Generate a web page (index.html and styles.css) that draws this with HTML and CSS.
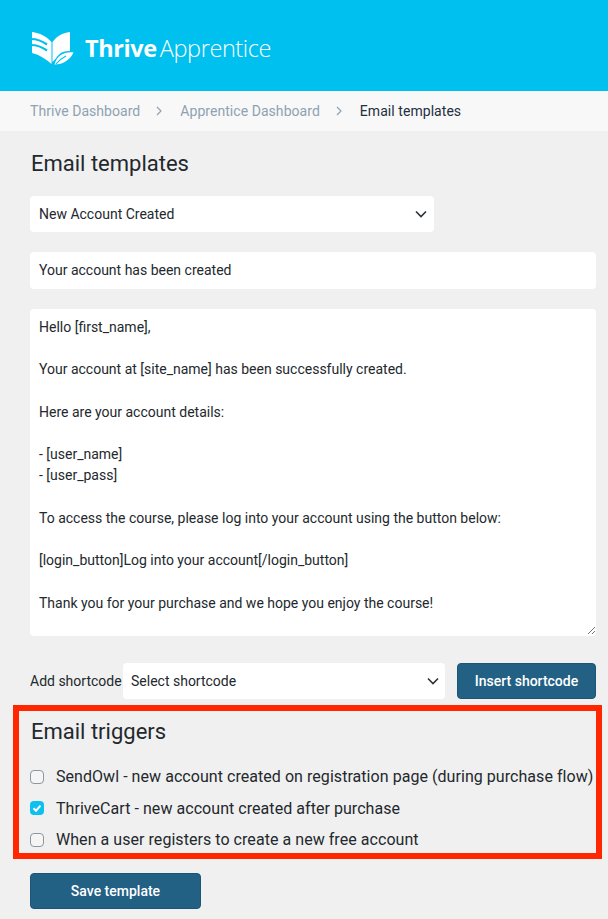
FILE: index.html
```html
<!DOCTYPE html>
<html lang="en">
<head>
    <meta charset="UTF-8">
    <meta name="viewport" content="width=device-width, initial-scale=1.0">
    <title>Email templates</title>
    <link rel="stylesheet" href="styles.css">
</head>
<body>
    <header class="topbar">
        <svg class="logo-icon" viewBox="0 0 42 34" width="42" height="34">
            <path class="page" d="M0 0C8 1 14 4 19.500 10V32C14 27 8 23 0 21Z"/>
            <path class="page" d="M38 0C30 1 25 4 20.500 10V30C25 25 31 21 38 20Z"/>
            <path class="gap" d="M-1 7C5 7 10 9 15 12.500M-1 13C5 13 10 15 15 18.500"/>
            <path class="leaf-back" d="M42 19.500C32 17.500 24 21 21 33.500L23 34.500C33 34 39 29 42 19.500Z"/>
            <path class="leaf" d="M41.500 20.500C32 19.500 25 23.500 22.500 32.500C31 32.500 38 28 41.500 20.500Z"/>
            <path class="gap thin" d="M24 32C27 28 30 26 34 24"/>
        </svg>
        <div class="logo-text"><b>Thrive</b><span>Apprentice</span></div>
    </header>

    <nav class="crumbs">
        <a href="#">Thrive Dashboard</a>
        <svg class="sep" viewBox="0 0 6 10" width="6" height="10"><path d="M1 1l4 4-4 4"/></svg>
        <a href="#">Apprentice Dashboard</a>
        <svg class="sep" viewBox="0 0 6 10" width="6" height="10"><path d="M1 1l4 4-4 4"/></svg>
        <span class="current">Email templates</span>
    </nav>

    <main class="content">
        <h2 class="title">Email templates</h2>

        <div class="select template-select">
            <span>New Account Created</span>
            <svg class="chev" viewBox="0 0 12 8" width="12" height="8"><path d="M1 1.500l5 5 5-5"/></svg>
        </div>

        <div class="field subject">Your account has been created</div>

        <div class="field body-text">
            <p>Hello [first_name],</p>
            <p>Your account at [site_name] has been successfully created.</p>
            <p>Here are your account details:</p>
            <p>- [user_name]<br>- [user_pass]</p>
            <p>To access the course, please log into your account using the button below:</p>
            <p>[login_button]Log into your account[/login_button]</p>
            <p>Thank you for your purchase and we hope you enjoy the course!</p>
            <svg class="grip" viewBox="0 0 9 9" width="9" height="9"><path d="M1 8l7-7M5 8l3-3"/></svg>
        </div>

        <div class="shortcode-row">
            <label>Add shortcode</label>
            <div class="select shortcode-select">
                <span>Select shortcode</span>
                <svg class="chev" viewBox="0 0 12 8" width="12" height="8"><path d="M1 1.500l5 5 5-5"/></svg>
            </div>
            <button class="btn insert">Insert shortcode</button>
        </div>

        <section class="triggers">
            <h2 class="title">Email triggers</h2>
            <div class="check-row">
                <span class="box"></span>
                <span>SendOwl - new account created on registration page (during purchase flow)</span>
            </div>
            <div class="check-row">
                <span class="box on"><svg viewBox="0 0 14 14" width="14" height="14"><path d="M3.500 7.200l2.500 2.500 4.500-5"/></svg></span>
                <span>ThriveCart - new account created after purchase</span>
            </div>
            <div class="check-row">
                <span class="box"></span>
                <span>When a user registers to create a new free account</span>
            </div>
        </section>

        <button class="btn save">Save template</button>
    </main>
</body>
</html>
```

FILE: styles.css
```css
body {
    margin: 0;
    background: #f0f0f0;
    color: #23282d;
    font-family: Roboto, "Liberation Sans", sans-serif;
    font-size: 14px;
    overflow: hidden;
}

.topbar {
    height: 91px;
    background: #00c0f0;
    display: flex;
    align-items: center;
    padding: 0 32px;
    box-sizing: border-box;
    gap: 11px;
}

.logo-icon {
    margin-top: 6px;
    overflow: visible;
}

.page, .leaf {
    fill: #fff;
}

.leaf-back {
    fill: #00c0f0;
}

.gap {
    fill: none;
    stroke: #00c0f0;
    stroke-width: 2.200;
}

.gap.thin {
    stroke-width: 1.200;
}

.logo-text {
    color: #fff;
    font-family: "Open Sans", sans-serif;
    font-size: 23.500px;
    letter-spacing: -0.400px;
    margin-top: 4px;
}

.logo-text b {
    font-weight: 700;
    margin-right: 3px;
}

.logo-text span {
    font-weight: 300;
}

.crumbs {
    height: 40px;
    background: #f8f8f8;
    display: flex;
    align-items: center;
    padding: 0 30px;
    letter-spacing: 0.050px;
}

.crumbs a {
    color: #8ea2b2;
    text-decoration: none;
}

.sep {
    margin: 0 18px 0 16px;
    fill: none;
    stroke: #8ea2b2;
    stroke-width: 1.200;
}

.current {
    color: #1f2f3f;
}

.content {
    padding: 0 12px 0 30px;
}

.title {
    margin: 0;
    font-size: 22px;
    font-weight: 400;
    line-height: 26px;
    color: #23282d;
}

.content > .title {
    margin-top: 20px;
    margin-left: 1px;
}

.select, .field {
    background: #fff;
    border-radius: 4px;
    box-sizing: border-box;
}

.select {
    height: 36px;
    display: flex;
    align-items: center;
    justify-content: space-between;
    padding: 0 7px 0 9px;
}

.chev {
    fill: none;
    stroke: #2c3338;
    stroke-width: 1.600;
}

.template-select {
    width: 404px;
    margin-top: 19px;
}

.subject {
    height: 37px;
    line-height: 37px;
    padding: 0 9px;
    margin-top: 20px;
}

.body-text {
    position: relative;
    height: 327px;
    margin-top: 20px;
    padding: 8px 9px;
    line-height: 21.200px;
}

.body-text p {
    margin: 0 0 21.200px;
}

.grip {
    position: absolute;
    right: 0;
    bottom: 1px;
    fill: none;
    stroke: #777;
    stroke-width: 1;
}

.shortcode-row {
    display: flex;
    align-items: center;
    margin-top: 27px;
}

.shortcode-row label {
    width: 93px;
    white-space: nowrap;
}

.shortcode-select {
    flex: 1;
    padding: 0 6px 0 8px;
}

.btn {
    height: 36px;
    border: 1px solid #1d5575;
    border-radius: 4px;
    background: #226084;
    color: #fff;
    font-family: inherit;
    font-size: 14px;
    font-weight: 500;
    padding: 0;
}

.insert {
    width: 139px;
    margin-left: 12px;
}

.triggers {
    margin: 6px -6px 0 -17px;
    padding: 8px 0 0 11px;
    height: 154px;
    box-sizing: border-box;
    border: 6px solid #ff2600;
}

.triggers .title {
    margin: 0 0 16px 1px;
}

.check-row {
    display: flex;
    align-items: center;
    height: 31.500px;
    gap: 12px;
    white-space: nowrap;
    font-size: 16px;
    letter-spacing: 0.050px;
}

.box {
    width: 14px;
    height: 14px;
    flex: none;
    box-sizing: border-box;
    border: 1px solid #8c979f;
    border-radius: 4px;
    background: #f5f5f5;
}

.box.on {
    border: 0;
    background: #0ec0f0;
}

.box svg {
    display: block;
    fill: none;
    stroke: #fff;
    stroke-width: 2;
}

.save {
    display: block;
    width: 171px;
    margin-top: 14px;
}
```
